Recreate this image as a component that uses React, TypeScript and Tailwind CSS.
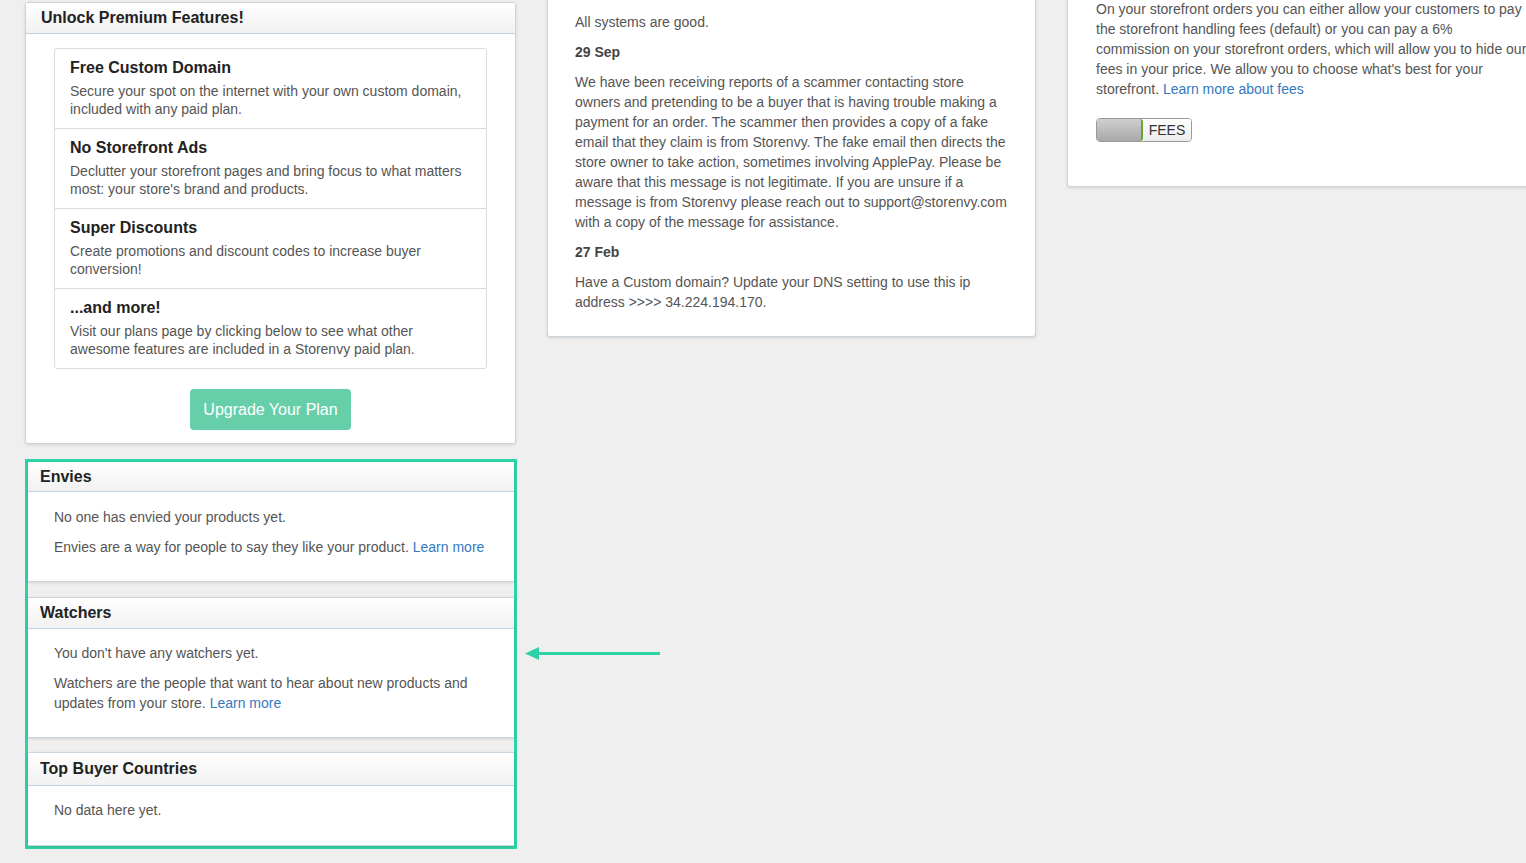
import React from 'react';

const font = { fontFamily: '"Liberation Sans", Arial, sans-serif' };

function PanelHeader({ title }: { title: string }) {
  return (
    <div className="h-[31px] flex items-center pl-[15px] border-b border-[#c3d3e0] bg-gradient-to-b from-white to-[#f1f1f1]">
      <h3 className="text-[16px] font-bold text-[#222] leading-5">{title}</h3>
    </div>
  );
}

const features = [
  {
    title: 'Free Custom Domain',
    desc: 'Secure your spot on the internet with your own custom domain, included with any paid plan.',
  },
  {
    title: 'No Storefront Ads',
    desc: "Declutter your storefront pages and bring focus to what matters most: your store's brand and products.",
  },
  {
    title: 'Super Discounts',
    desc: 'Create promotions and discount codes to increase buyer conversion!',
  },
  {
    title: '...and more!',
    desc: 'Visit our plans page by clicking below to see what other awesome features are included in a Storenvy paid plan.',
  },
];

function PremiumPanel() {
  return (
    <div className="w-[491px] bg-white border border-[#c9d6e0] rounded-[3px] shadow-[0_1px_3px_rgba(0,0,0,0.12)]">
      <PanelHeader title="Unlock Premium Features!" />
      <div className="px-[28px] pt-[14px] pb-[13px]">
        <div className="border border-[#dcdcdc] rounded-[3px]">
          {features.map((f, i) => (
            <div
              key={f.title}
              className={`px-[15px] pt-[9px] ${i > 0 ? 'h-[80px] border-t border-[#dcdcdc]' : 'h-[79px]'}`}
            >
              <div className="text-[16px] font-bold text-[#222] leading-5">{f.title}</div>
              <p className="text-[14px] leading-[18px] text-[#555] mt-[4px]">{f.desc}</p>
            </div>
          ))}
        </div>
        <div className="flex justify-center mt-[20px]">
          <button className="w-[161px] h-[41px] rounded-[4px] bg-[#66cfa9] text-white text-[16px]">
            Upgrade Your Plan
          </button>
        </div>
      </div>
    </div>
  );
}

function Link({ children }: { children: React.ReactNode }) {
  return <a className="text-[#3479c0]">{children}</a>;
}

function SmallPanel({
  title,
  children,
  headerH = 'h-[31px]',
  bodyClass,
  first = false,
  className = '',
}: {
  title: string;
  children: React.ReactNode;
  headerH?: string;
  bodyClass: string;
  first?: boolean;
  className?: string;
}) {
  return (
    <div
      className={`bg-white border-b border-[#c9d6e0] shadow-[0_1px_3px_rgba(0,0,0,0.12)] ${first ? '' : 'border-t'} ${className}`}
    >
      <div className={`${headerH} flex items-center pl-[12px] border-b border-[#c3d3e0] bg-gradient-to-b from-white to-[#f1f1f1]`}>
        <h3 className="text-[16px] font-bold text-[#222] leading-5">{title}</h3>
      </div>
      <div className={`pl-[26px] pr-[20px] text-[14px] leading-5 text-[#555] ${bodyClass}`}>{children}</div>
    </div>
  );
}

function HighlightBox() {
  return (
    <div className="w-[492px] mt-[15px] border-[3px] border-[#2dd3a7] bg-[#efefef] flex flex-col">
      <SmallPanel title="Envies" first headerH="h-[30px]" bodyClass="pt-[15px] h-[89px]">
        <p>No one has envied your products yet.</p>
        <p className="mt-[10px]">
          Envies are a way for people to say they like your product. <Link>Learn more</Link>
        </p>
      </SmallPanel>
      <SmallPanel title="Watchers" className="mt-[15px]" bodyClass="pt-[14px] h-[108px]">
        <p>You don't have any watchers yet.</p>
        <p className="mt-[10px]">
          Watchers are the people that want to hear about new products and updates from your store.{' '}
          <Link>Learn more</Link>
        </p>
      </SmallPanel>
      <SmallPanel title="Top Buyer Countries" className="mt-[14px]" headerH="h-[33px]" bodyClass="pt-[14px] h-[59px]">
        <p>No data here yet.</p>
      </SmallPanel>
    </div>
  );
}

function NewsPanel() {
  return (
    <div className="w-[489px] bg-white border border-t-0 border-[#c9d6e0] rounded-b-[3px] shadow-[0_1px_3px_rgba(0,0,0,0.12)] pl-[27px] pr-[26px] pt-[12px] pb-[24px] text-[14px] leading-5 text-[#555]">
      <p>All systems are good.</p>
      <p className="mt-[10px] font-bold text-[#444]">29 Sep</p>
      <p className="mt-[10px]">
        We have been receiving reports of a scammer contacting store owners and pretending to be a buyer that is
        having trouble making a payment for an order. The scammer then provides a copy of a fake email that they
        claim is from Storenvy. The fake email then directs the store owner to take action, sometimes involving
        ApplePay. Please be aware that this message is not legitimate. If you are unsure if a message is from
        Storenvy please reach out to support@storenvy.com with a copy of the message for assistance.
      </p>
      <p className="mt-[10px] font-bold text-[#444]">27 Feb</p>
      <p className="mt-[10px]">
        Have a Custom domain? Update your DNS setting to use this ip address &gt;&gt;&gt;&gt; 34.224.194.170.
      </p>
    </div>
  );
}

function FeesPanel() {
  return (
    <div className="w-[490px] shrink-0 bg-white border border-t-0 border-[#c9d6e0] rounded-b-[3px] shadow-[0_1px_3px_rgba(0,0,0,0.12)] pl-[28px] pr-[27px] pb-[44px] text-[14px] leading-5 text-[#555]">
      <p className="-mt-px">
        On your storefront orders you can either allow your customers to pay the storefront handling fees (default)
        or you can pay a 6% commission on your storefront orders, which will allow you to hide our fees in your
        price. We allow you to choose what's best for your storefront. <Link>Learn more about fees</Link>
      </p>
      <div className="mt-[19px] flex w-[96px] h-[24px] rounded-[4px] border border-[#9a9a9a] overflow-hidden">
        <div className="w-[46px] bg-gradient-to-b from-[#cfcfcf] to-[#a9a9a9] border-r-2 border-[#6aa62c] rounded-r-[3px]" />
        <div className="flex-1 flex items-center justify-center bg-gradient-to-b from-white to-[#ececec] text-[14px] text-[#333] leading-none">
          FEES
        </div>
      </div>
    </div>
  );
}

export default function App() {
  return (
    <div className="relative w-[1526px] h-[863px] overflow-hidden bg-[#efefef]" style={font}>
      <div className="flex items-start pl-[25px]">
        <div className="w-[492px] shrink-0 pt-[2px]">
          <PremiumPanel />
          <HighlightBox />
        </div>
        <div className="ml-[30px] shrink-0">
          <NewsPanel />
        </div>
        <div className="ml-[31px] shrink-0">
          <FeesPanel />
        </div>
      </div>
      <svg className="absolute left-[522px] top-[645px]" width="140" height="16" viewBox="0 0 140 16">
        <line x1="12" y1="8.5" x2="138" y2="8.5" stroke="#2dd3a7" strokeWidth="3" />
        <polygon points="3,8.5 17,2 17,15" fill="#2dd3a7" />
      </svg>
    </div>
  );
}
